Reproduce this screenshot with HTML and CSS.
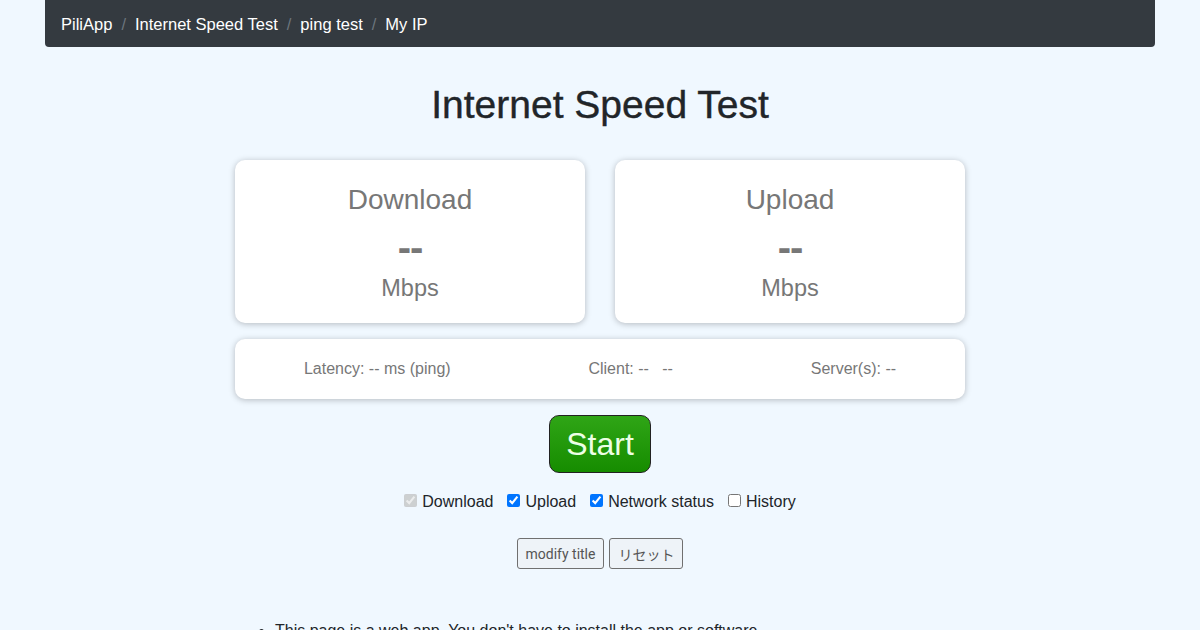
FILE: index.html
```html
<!DOCTYPE html>
<html lang="en">
<head>
<meta charset="utf-8">
<title>Internet Speed Test</title>
<link rel="stylesheet" href="styles.css">
</head>
<body>
<div class="container">
  <nav class="crumbs">
    <a href="#">PiliApp</a><span class="sep">/</span>
    <a href="#">Internet Speed Test</a><span class="sep">/</span>
    <a href="#">ping test</a><span class="sep">/</span>
    <a href="#">My IP</a>
  </nav>
  <main class="main">
    <h1 class="title">Internet Speed Test</h1>
    <div class="cards">
      <div class="card">
        <div class="card-label">Download</div>
        <div class="card-value">--</div>
        <div class="card-unit">Mbps</div>
      </div>
      <div class="card">
        <div class="card-label">Upload</div>
        <div class="card-value">--</div>
        <div class="card-unit">Mbps</div>
      </div>
    </div>
    <div class="info">
      <span>Latency: -- ms (ping)</span>
      <span>Client: --&nbsp;&nbsp;&nbsp;--</span>
      <span>Server(s): --</span>
    </div>
    <button class="start">Start</button>
    <div class="opts">
      <label><input type="checkbox" checked disabled>Download</label>
      <label><input type="checkbox" checked>Upload</label>
      <label><input type="checkbox" checked>Network status</label>
      <label><input type="checkbox">History</label>
    </div>
    <div class="tools">
      <button class="tool">modify title</button>
      <button class="tool">リセット</button>
    </div>
    <ul class="notes">
      <li>This page is a web app. You don't have to install the app or software.</li>
    </ul>
  </main>
</div>
</body>
</html>
```

FILE: styles.css
```css
html, body {
  margin: 0;
  padding: 0;
  background: #f0f8ff;
  font-family: "Liberation Sans", Arial, sans-serif;
  color: #212529;
}
.container {
  width: 1110px;
  margin: 0 auto;
}
.crumbs {
  background: #343a40;
  height: 47px;
  border-radius: 0 0 4px 4px;
  display: flex;
  align-items: center;
  padding: 1px 16px 0;
  box-sizing: border-box;
  font-size: 16.5px;
}
.crumbs a {
  color: #fff;
  text-decoration: none;
}
.crumbs .sep {
  color: #6c757d;
  padding: 0 9px;
}
.main {
  display: flex;
  flex-direction: column;
  align-items: center;
}
.title {
  margin: 35px 0 0;
  font-size: 39px;
  font-weight: 500;
  line-height: 46px;
  color: #212529;
  -webkit-text-stroke: 0.4px #212529;
}
.cards {
  margin-top: 32px;
  display: flex;
  gap: 30px;
}
.card {
  width: 350px;
  height: 163px;
  box-sizing: border-box;
  background: #fff;
  border-radius: 10px;
  box-shadow: 0 1px 6px rgba(0,0,0,0.25);
  display: flex;
  flex-direction: column;
  align-items: center;
  color: #777;
}
.card-label {
  margin-top: 23px;
  font-size: 28px;
  line-height: 34px;
}
.card-value {
  margin-top: 10px;
  font-size: 40px;
  font-weight: bold;
  line-height: 40px;
  letter-spacing: -1px;
}
.card-unit {
  margin-top: 7px;
  font-size: 23.5px;
  line-height: 28px;
}
.info {
  margin-top: 16px;
  width: 730px;
  height: 60px;
  box-sizing: border-box;
  background: #fff;
  border-radius: 10px;
  box-shadow: 0 1px 6px rgba(0,0,0,0.25);
  display: flex;
  justify-content: space-around;
  align-items: center;
  font-size: 16px;
  color: #777;
}
.start {
  margin-top: 16px;
  width: 102px;
  height: 58px;
  border: 1px solid #222;
  border-radius: 10px;
  background: linear-gradient(#2fa516, #168c00);
  color: #ecffe6;
  font-family: "Liberation Sans", Arial, sans-serif;
  font-size: 32px;
  padding: 0;
  cursor: pointer;
}
.opts {
  margin-top: 20px;
  display: flex;
  gap: 14px;
  font-size: 16px;
  color: #212529;
}
.opts label {
  display: flex;
  align-items: center;
}
.opts input {
  margin: 0 5px 4px 0;
  width: 13px;
  height: 13px;
}
.tools {
  margin-top: 27px;
  display: flex;
  gap: 5px;
}
.tool {
  height: 31px;
  padding: 0 8px;
  border: 1px solid #707070;
  border-radius: 3px;
  background: #eef3f8;
  color: #555;
  font-family: Roboto, "Noto Sans CJK JP", sans-serif;
  font-size: 14px;
}
.notes {
  align-self: flex-start;
  margin: 53px 0 0 216px;
  padding: 0 0 0 14px;
  font-size: 16px;
  color: #212529;
}
```
